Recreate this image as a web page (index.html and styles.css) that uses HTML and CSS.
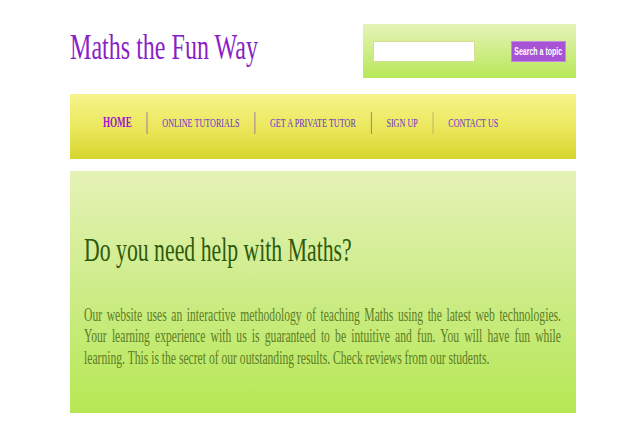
FILE: index.html
```html
<!DOCTYPE html>
<html lang="en">
<head>
<meta charset="utf-8">
<title>Maths the Fun Way</title>
<link rel="stylesheet" href="styles.css">
</head>
<body>
<div class="page">
  <header class="top">
    <h1 class="brand"><span class="brand-text">Maths the Fun Way</span></h1>
    <form class="search">
      <input class="search-input" type="text" aria-label="Search">
      <button class="search-btn" type="button"><span class="search-label">Search a topic</span></button>
    </form>
  </header>
  <nav class="nav">
    <ul class="menu">
      <li class="menu-item"><a class="menu-link menu-link--active" href="#">HOME</a></li>
      <li class="menu-item"><a class="menu-link" href="#">ONLINE TUTORIALS</a></li>
      <li class="menu-item"><a class="menu-link" href="#">GET A PRIVATE TUTOR</a></li>
      <li class="menu-item"><a class="menu-link" href="#">SIGN UP</a></li>
      <li class="menu-item menu-item--last"><a class="menu-link" href="#">CONTACT US</a></li>
    </ul>
  </nav>
  <main class="hero">
    <h2 class="hero-title">Do you need help with Maths?</h2>
    <p class="hero-text">Our website uses an interactive methodology of teaching Maths using the latest web technologies. Your learning experience with us is guaranteed to be intuitive and fun. You will have fun while learning. This is the secret of our outstanding results. Check reviews from our students.</p>
  </main>
</div>
</body>
</html>
```

FILE: styles.css
```css
html, body {
  margin: 0;
  padding: 0;
  background: #ffffff;
  overflow: hidden;
}

body {
  font-family: "Liberation Serif", "Times New Roman", serif;
}

.page {
  width: 506px;
  margin-left: 70px;
  padding-top: 24px;
}

.top {
  display: flex;
  justify-content: space-between;
  align-items: flex-start;
  height: 54px;
}

.brand {
  margin: 0;
  padding-top: 5px;
  font-size: 36px;
  line-height: 36px;
  font-weight: normal;
  color: #8a1fc6;
  white-space: nowrap;
}

.brand-text {
  display: inline-block;
  transform: scaleX(0.668);
  transform-origin: left center;
}

.search {
  margin: 0;
  width: 213px;
  height: 54px;
  box-sizing: border-box;
  padding: 0 10px;
  display: flex;
  align-items: center;
  justify-content: space-between;
  background: linear-gradient(to bottom, #e6f3b8 0%, #b7e859 100%);
}

.search-input {
  width: 102px;
  height: 21px;
  box-sizing: border-box;
  margin: 0;
  border: 1px solid #d6df8e;
  background: #ffffff;
  padding: 0 4px;
}

.search-btn {
  width: 55px;
  height: 21px;
  box-sizing: border-box;
  margin: 0;
  padding: 0;
  border: 1px solid #c488e4;
  background: #a653d6;
  color: #ffffff;
  display: flex;
  align-items: center;
  justify-content: center;
  overflow: visible;
}

.search-label {
  display: inline-block;
  font-family: "Liberation Sans", Arial, sans-serif;
  font-weight: bold;
  font-size: 10px;
  white-space: nowrap;
  transform: scaleX(0.7);
}

.nav {
  margin-top: 16px;
  height: 65px;
  box-sizing: border-box;
  padding-top: 18px;
  background: linear-gradient(to bottom, #f7f48e 0%, #ebe85e 50%, #d6d52e 100%);
  overflow: hidden;
}

.menu {
  list-style: none;
  margin: 0;
  padding: 0 0 0 27.7px;
  display: flex;
  align-items: center;
  width: max-content;
  transform: scaleX(0.65);
  transform-origin: left top;
}

.menu-item {
  height: 22px;
  display: flex;
  align-items: center;
  padding: 0 23px;
  border-left: 1.6px solid #8040c0;
}

.menu-item:first-child {
  border-left: none;
}

.menu-item--last {
  border-left-color: #b09a68;
}

.menu-link {
  font-size: 12.5px;
  line-height: 24px;
  color: #6a2fd0;
  text-decoration: none;
  white-space: nowrap;
}

.menu-link--active {
  font-size: 14px;
  font-weight: bold;
  color: #a012d0;
}

.hero {
  display: block;
  margin-top: 12px;
  height: 242px;
  box-sizing: border-box;
  padding: 61.5px 0 0 14px;
  background: linear-gradient(to bottom, #e5f2b6 0%, #cdec88 50%, #b6e853 100%);
  overflow: hidden;
}

.hero-title {
  margin: 0;
  font-size: 34px;
  line-height: 34px;
  font-weight: normal;
  color: #2d5a0c;
  white-space: nowrap;
  width: max-content;
  transform: scaleX(0.64);
  transform-origin: left top;
}

.hero-text {
  margin: 38px 0 0 0;
  width: 739.5px;
  font-size: 18px;
  line-height: 21.7px;
  color: #5c7d25;
  text-align: justify;
  transform: scaleX(0.645);
  transform-origin: left top;
}
```
